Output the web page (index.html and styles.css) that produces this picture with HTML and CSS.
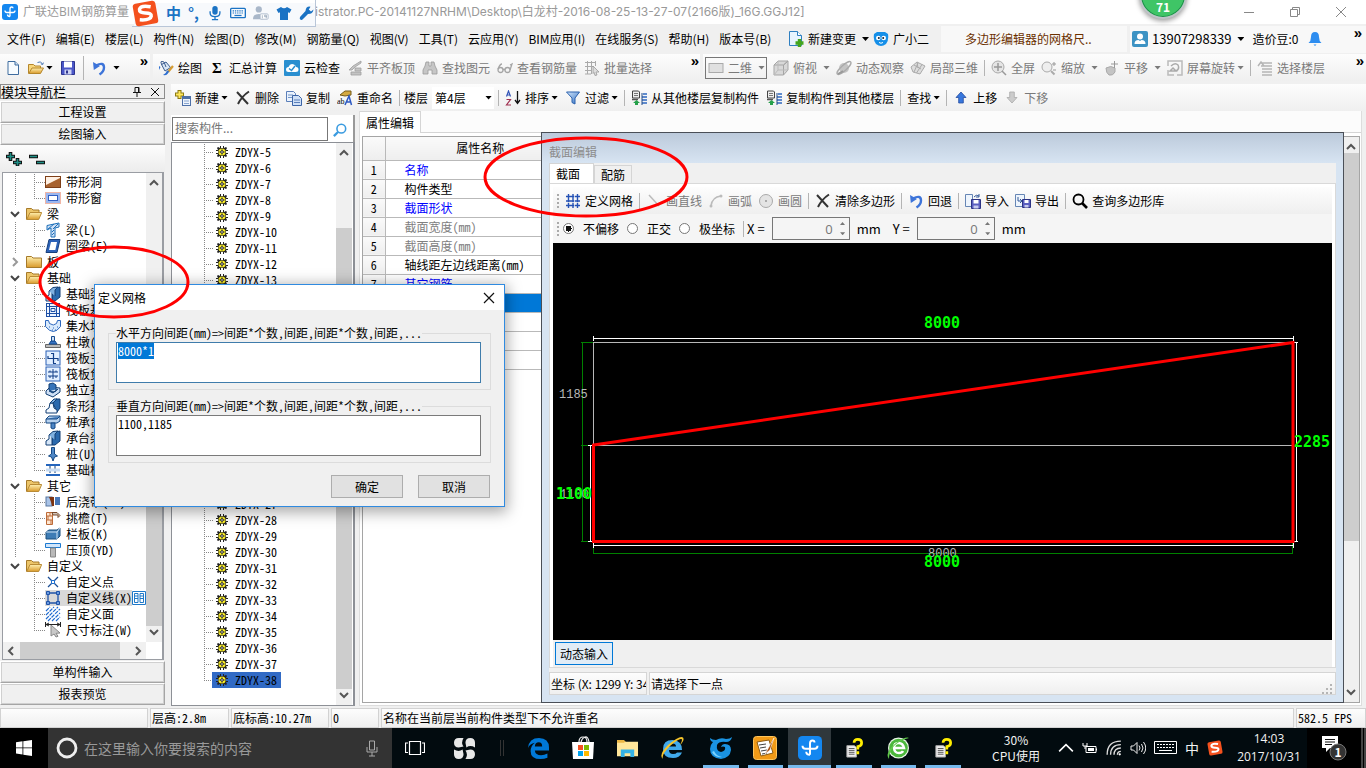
FILE: index.html
```html
<!DOCTYPE html>
<html lang="zh-CN">
<head>
<meta charset="utf-8">
<title>广联达BIM钢筋算量软件</title>
<link rel="stylesheet" href="styles.css">
</head>
<body>
<svg class="defs" aria-hidden="true">
<defs>
<linearGradient id="gFold" x1="0" y1="0" x2="0" y2="1"><stop offset="0" stop-color="#fff0b0"/><stop offset="1" stop-color="#d99a2b"/></linearGradient>
<linearGradient id="gBlue" x1="0" y1="0" x2="1" y2="1"><stop offset="0" stop-color="#d6e8fb"/><stop offset="1" stop-color="#2f6fc4"/></linearGradient>
</defs>
<symbol id="app" viewBox="0 0 16 16"><rect width="16" height="16" rx="3" fill="#1487f0"/><path d="M8 12.500V5q0-2 1.700-2 1.300 0 1.300 1.300M3 6.500q0 2 2 2h6q2 0 2-2M8 12.500q-2.500 0-2.500-2" fill="none" stroke="#fff" stroke-width="1.300"/></symbol>
<symbol id="sogou" viewBox="0 0 26 26"><g transform="rotate(-10 13 13)"><rect x="2" y="2" width="22" height="22" rx="3" fill="#f4511e"/><path d="M19 7.500Q10 4 8 8q-1 3.500 5 4.500t5 4q-1.500 4-11.500 1.500" fill="none" stroke="#fff" stroke-width="3.400"/></g></symbol>
<symbol id="mic" viewBox="0 0 16 18"><rect x="5" y="1" width="6" height="10" rx="3"/><path d="M2.500 7v2q0 4 5.500 4t5.500-4V7M8 13v3M4.500 16.500h7" fill="none" stroke="currentColor" stroke-width="1.500"/></symbol>
<symbol id="kbd" viewBox="0 0 18 14"><rect x=".75" y="1.750" width="16.500" height="10.500" rx="1" fill="none" stroke="currentColor" stroke-width="1.500"/><path d="M3 4.500h12M3 7h12" stroke="currentColor" stroke-width="1.400" stroke-dasharray="1.500 1"/><path d="M5 9.800h8" stroke="currentColor" stroke-width="1.400"/></symbol>
<symbol id="person" viewBox="0 0 18 16"><circle cx="6.500" cy="4" r="3.500" fill="#a9b7c9"/><path d="M0 15q0-6 6.500-6 4 0 5 2v4z" fill="#a9b7c9"/><rect x="8" y="9" width="9" height="6" rx="1" fill="#fff" stroke="#a9b7c9"/><path d="M10.500 10.500v3.500M13 10.500h2v1.700h-2zM15 11v3" stroke="#8fa0b5" fill="none" stroke-width=".8"/></symbol>
<symbol id="shirt" viewBox="0 0 16 16"><path d="M5 2q3 2.500 6 0l4.500 2.500-2 3.500-1.500-.8V15H4V7.200L2.500 8 .5 4.500z" fill="#1b73c4"/></symbol>
<symbol id="wrench" viewBox="0 0 16 16"><path d="M14.500 4.500 12 6.500 9.800 4.500 11.500 1.700Q7 1 6.500 6L1 12q-.8 2 .6 2.800 1.400.6 2.400-.8L9 9q5 0 5.500-4.500z" fill="#1b73c4"/></symbol>
<symbol id="page" viewBox="0 0 16 16"><path d="M3 1.500h7l3.500 3.500v9.500H3z" fill="#f8fcff" stroke="#3f6c9f"/><path d="M10 1.500V5h3.500" fill="#cfe0f2" stroke="#3f6c9f"/></symbol>
<symbol id="open" viewBox="0 0 16 16"><path d="M.5 13.500v-9h5l1.500 1.500h5.500v2" fill="#f7d67c" stroke="#b5862b"/><path d="M.8 13.500 4 8h11.500l-3 5.500z" fill="url(#gFold)" stroke="#b5862b"/><path d="M9.500 2.500q3.500-2 5 1.500M12.800 3.800l1.900.8 .7-2" fill="none" stroke="#4b79b5"/></symbol>
<symbol id="folder" viewBox="0 0 16 14"><path d="M.5 12.500v-11h5L7 3h8.500v9.500z" fill="url(#gFold)" stroke="#a67a2a"/></symbol>
<symbol id="folderO" viewBox="0 0 16 14"><path d="M.5 12.500v-11h5L7 3h6v3" fill="#ecc569" stroke="#a67a2a"/><path d="M.8 12.500 4 5.500h11.700l-3 7z" fill="url(#gFold)" stroke="#b98b35"/></symbol>
<symbol id="save" viewBox="0 0 16 16"><path d="M1.500 1.500h13v13h-13z" fill="#4b57c8" stroke="#2d348e"/><path d="M4 1.500h8v6H4z" fill="#fff"/><path d="M4.500 9.500h7v5h-7z" fill="#cdd3f2"/><path d="M6 10.500h2v3H6z" fill="#2d348e"/></symbol>
<symbol id="undo" viewBox="0 0 16 16"><path d="M5 5.500q8-4 8 2 0 4-4.500 7" fill="none" stroke="#3d74d9" stroke-width="2.400"/><path d="M2 2l.8 8L9 6z" fill="#3d74d9"/></symbol>
<symbol id="paint" viewBox="0 0 16 16"><path d="M3.500 4.500 8 2l4.500 5.500L7 11z" fill="#d9e6f5" stroke="#3c5d8f"/><path d="M4 5Q1 0 6 2l2 5" fill="none" stroke="#3c5d8f"/><path d="M1 6v4l1.500-3" fill="#2e6fd0"/><path d="M15 6l-5 6" stroke="#d59b32" stroke-width="2.200"/><path d="M5 15q5 1 6-4l-2-.5Q8 14 5 15z" fill="#2e6fd0"/></symbol>
<symbol id="cloud" viewBox="0 0 16 16"><rect width="16" height="16" rx="1" fill="#2a8fd0"/><path d="M2 9.500Q2 7 4.500 7 6 3 10 4.500q2 1 2 2.500 2.500 0 2.500 2.500t-3 2.500H4.500Q2 12 2 9.500z" fill="#fff"/><path d="m5 8.500 2.500 2L11 6" fill="none" stroke="#2a8fd0" stroke-width="1.500"/></symbol>
<symbol id="slab" viewBox="0 0 16 16"><path d="m2 10 4-4 8-5v2L8 7l-3 3zM4 12h10v3H4zM8 8h6v3H8z" fill="#c4c4c4" stroke="#9e9e9e" stroke-width=".8"/></symbol>
<symbol id="binoc" viewBox="0 0 16 16"><path d="M4 2h3v4h2V2h3l1 4 2 4v4h-5v-4H6v4H1v-4l2-4z" fill="#c6c6c6" stroke="#999" stroke-width=".8"/></symbol>
<symbol id="glasses" viewBox="0 0 16 16"><g fill="none" stroke="#a5a5a5" stroke-width="1.300"><circle cx="3.500" cy="10" r="2.500"/><circle cx="10.500" cy="10" r="2.500"/><path d="M6 9.500h2M1 9q2-5 4-5M13 10l2-6-2 1"/></g></symbol>
<symbol id="gridsel" viewBox="0 0 16 16"><path d="M1 2.500h11M1 6.500h8M1 10.500h7M1 14h6M3.500 1v13M7.500 1v13M11.500 1v5" stroke="#aaa" fill="none"/><path d="m9 6 6 6h-3l1 3-2 .5-1-3-1 1z" fill="#ddd" stroke="#999" stroke-width=".8"/></symbol>
<symbol id="rect" viewBox="0 0 16 16"><rect x="1" y="3.500" width="14" height="9" fill="#e0e0e0" stroke="#aaa"/></symbol>
<symbol id="cube" viewBox="0 0 16 16"><path d="M1 5h9.500v10H1zM1 5l4-4h10l-4.500 4M15 1v9l-4.500 5V5z" fill="#d8d8d8" stroke="#a5a5a5"/><path d="M5 1v9h10M5 10l-4 5" fill="none" stroke="#bbb"/></symbol>
<symbol id="orbit" viewBox="0 0 16 16"><circle cx="8" cy="8" r="5" fill="#c4c4c4"/><ellipse cx="8" cy="8" rx="9" ry="2.700" transform="rotate(-42 8 8)" fill="none" stroke="#aaa" stroke-width="1.300"/><path d="m2 14 5-3" stroke="#999" stroke-width="2"/></symbol>
<symbol id="iso" viewBox="0 0 16 16"><path d="m1 7 6-5 8 4-5 8-7-2zM4 5l7 4M8 3 4 12M12 4.500 6.500 13M7 2l1 6" fill="#ddd" stroke="#aaa"/></symbol>
<symbol id="full" viewBox="0 0 16 16"><circle cx="7" cy="7" r="6" fill="#e5e5e5" stroke="#aaa"/><path d="M7 3v8M3 7h8m0 4 4 4" stroke="#999" stroke-width="1.500"/></symbol>
<symbol id="zoomi" viewBox="0 0 16 16"><circle cx="6" cy="7" r="5" fill="#eee" stroke="#aaa"/><path d="m10 11 3.500 3.500" stroke="#aaa" stroke-width="2"/><path d="M11 4h4m-2-2v4M12 10h3" stroke="#999"/></symbol>
<symbol id="pan" viewBox="0 0 16 16"><path d="M2 8q5-3 9 0v4q-2 4-6 3-3-2-3-7z" fill="#c4c4c4" stroke="#aaa"/><path d="M7 4h7m-3.500-3v7" stroke="#999"/></symbol>
<symbol id="rot" viewBox="0 0 16 16"><path d="M1 6V1h14v14h-5M1 10v5h6" fill="none" stroke="#bbb" stroke-width="1.500"/><path d="M4 6q4-4 7-1 2 4-2 6M3 11l3-3 3 3z" fill="none" stroke="#aaa" stroke-width="1.500"/></symbol>
<symbol id="floors" viewBox="0 0 16 16"><path d="M5 3h10M4 6h11M5 9h10M5 12h10M5 15h10M1 6l3-4 3 4" fill="none" stroke="#b5b5b5" stroke-width="1.500"/></symbol>
<symbol id="new" viewBox="0 0 16 16"><path d="M4.500 0v9M0 4.500h9" stroke="#8c7a12" stroke-width="4"/><path d="M4.500 1v7M1 4.500h7" stroke="#ffe75e" stroke-width="2"/><rect x="7.500" y="6.500" width="8" height="9" fill="#eef4fc" stroke="#4e70a8"/><path d="M8 8h7" stroke="#4e70a8" stroke-width="2"/><path d="M9 11h5m-5 2.500h5" stroke="#8aa6d0"/></symbol>
<symbol id="del" viewBox="0 0 16 16"><path d="m2 2 11 12M14 1.500Q7 6 3 14" fill="none" stroke="#333" stroke-width="2"/></symbol>
<symbol id="copy" viewBox="0 0 16 16"><path d="M.5 1.500h7l2 2v8h-9z" fill="#eaf2fd" stroke="#5b7fb9"/><path d="M2 5h5M2 7.500h4" stroke="#7596c6"/><path d="M6.500 5.500h6l3 3v7h-9z" fill="#cfe0f7" stroke="#3c64a6"/><path d="M8 10h6m-6 2.500h6" stroke="#5b7fb9"/></symbol>
<symbol id="rename" viewBox="0 0 16 16"><path d="m3 5 5-4h6v4l-6 1z" fill="#d4a940" stroke="#755a18"/><text x="0" y="14" font-size="8" font-family="Liberation Serif">ab</text><path d="m8 15 4-9 2.500 9m-5-3h4" fill="none" stroke="#2b58c2" stroke-width="1.500"/></symbol>
<symbol id="sort" viewBox="0 0 16 16"><path d="m1.500 6.500 2-5.500 2 5.500M2 5h3" fill="none" stroke="#3355b8" stroke-width="1.200"/><path d="M1.500 9.500h4l-4 5.500h4.500" fill="none" stroke="#a03050" stroke-width="1.200"/><path d="M12.500 1v12m-2.500-3 2.500 3.500L15 10" fill="none" stroke="#111" stroke-width="1.300"/></symbol>
<symbol id="funnel" viewBox="0 0 16 16"><path d="M1.500 2h13L10 8v6l-3-1.500V8z" fill="url(#gBlue)" stroke="#2b61ad"/></symbol>
<symbol id="fromf" viewBox="0 0 16 16"><path d="M1.500 1h6l1 1v6h-7z" fill="#eee" stroke="#444"/><path d="M3 3.500h4M3 5.500h4" stroke="#777"/><path d="M1 9.500h6" stroke="#555" stroke-width="1.500"/><path d="M7 15H4v-2H2l3.500-3L9 13H7z" fill="#25a04a"/><path d="M12 4h4m-5 3h5m-5 3h5m-5 3h5" stroke="#2f68c0" stroke-width="1.600"/><path d="M11 3v12" stroke="#244a84"/></symbol>
<symbol id="up" viewBox="0 0 16 16"><path d="m8 2 5 5.500h-2.700V13H5.700V7.500H3z" fill="#3877dd" stroke="#244b9e" stroke-width=".8"/></symbol>
<symbol id="down" viewBox="0 0 16 16"><path d="m8 13 5-5.500h-2.700V2H5.700v5.500H3z" fill="#ccc" stroke="#aaa" stroke-width=".8"/></symbol>
<symbol id="newchg" viewBox="0 0 16 16"><path d="M1.500.5h8l4 4v10h-12z" fill="#e7f4ff" stroke="#2e7fc1"/><path d="M9.500.5v4h4" fill="#fff" stroke="#2e7fc1"/><path d="M11.500 8v8m-4-4h8" stroke="#43a51e" stroke-width="3.400"/></symbol>
<symbol id="mascot" viewBox="0 0 16 16"><path d="m1 3 3-2 8 0 3 2q1 6-2 10-5 4-10 0-3-4-2-10z" fill="#158fe8"/><circle cx="5.300" cy="7" r="2.300" fill="#fff"/><circle cx="10.700" cy="7" r="2.300" fill="#fff"/><circle cx="5.800" cy="7" r="1" fill="#123"/><circle cx="10.200" cy="7" r="1" fill="#123"/><path d="M6 11.500q2 1.500 4 0" stroke="#fff" fill="none"/></symbol>
<symbol id="user" viewBox="0 0 16 16"><rect width="16" height="16" rx="2" fill="#3d93c4"/><circle cx="8" cy="5.500" r="3" fill="#fff"/><path d="M2.500 13q0-4 4-4L8 10l1.500-1q4 0 4 4z" fill="#fff"/></symbol>
<symbol id="bell" viewBox="0 0 14 16"><path d="M7 1q4 0 4 5 0 4 2.500 6H.5Q3 10 3 6q0-5 4-5z" fill="#2d8df0"/><path d="M5.500 13.500h3L7 15z" fill="#2d8df0"/></symbol>
<symbol id="chevD" viewBox="0 0 12 12"><path d="m2 4 4 4 4-4" fill="none" stroke="currentColor" stroke-width="2"/></symbol>
<symbol id="chevR" viewBox="0 0 12 12"><path d="m4 2 4 4-4 4" fill="none" stroke="currentColor" stroke-width="2"/></symbol>
<symbol id="gear" viewBox="0 0 12 12"><path d="M4 0h1v2h2V0h1v2l2-1 1 1-1 2h2v1h-2v2h2v1h-2l1 2-1 1-2-1v2H7v-2H5v2H4v-2l-2 1-1-1 1-2H0V7h2V5H0V4h2L1 2l1-1 2 1z" fill="#222"/><circle cx="6" cy="6" r="3.600" fill="#fbee22"/><path d="M6 2.500v7M2.500 6h7" stroke="#444" stroke-width=".7"/><circle cx="6" cy="6" r="1.300" fill="#fff" stroke="#222"/></symbol>
<symbol id="t-hole" viewBox="0 0 16 14"><rect x=".5" y="1.500" width="15" height="11" fill="#fff1e4" stroke="#7e3f18"/><path d="M1 10 15 3v9H1z" fill="#a8622f"/></symbol>
<symbol id="t-win" viewBox="0 0 16 14"><rect x=".5" y="1.500" width="15" height="11" fill="#9db8ee" stroke="#f0b6a6"/><rect x="3.500" y="4.500" width="9" height="5" fill="#fff" stroke="#315fc4"/></symbol>
<symbol id="t-beam" viewBox="0 0 16 16"><path d="M2 3.500 14 1v4l-4 1v9H6V6L2 8z" fill="#cfe0f5" stroke="#1c6fb9"/><path d="m3 7 6-5m-1 5 5-5M7 10l2-2M7 13l2-2" stroke="#1c6fb9"/></symbol>
<symbol id="t-ring" viewBox="0 0 16 16"><path d="M4 1.500h11l-3 13H1z" fill="#2c62b8" stroke="#173f7c"/><path d="M6 4h6l-1.700 8H4z" fill="#fff"/></symbol>
<symbol id="t-fbeam" viewBox="0 0 16 16"><path d="M7 15V5l3-3 5-1v10l-5 4z" fill="#2a69ad" stroke="#123f74"/><path d="M1 15v-4l3-2V5h3v10z" fill="#d7e7f8" stroke="#123f74"/><path d="M4 5 8 1.500l5-.5-3 3v6" fill="#7fb0e0" stroke="#123f74"/></symbol>
<symbol id="t-raft" viewBox="0 0 16 16"><rect x="1.500" y="1.500" width="13" height="13" fill="#eef5ff" stroke="#1d4fa5"/><path d="M4.500 1v14m7-14v14M1 4.500h14m-14 7h14M6 6.500h4v3H6z" fill="none" stroke="#1d4fa5"/></symbol>
<symbol id="t-pit" viewBox="0 0 16 16"><path d="M.5 2.500h3l1 3q4 3 7 0l1-3h3v6q-7 10-15 0z" fill="#d9eafc" stroke="#2b66bd"/><path d="M4 9h1m3 1h1m3-1h1m-6 3h1m2 0h1" stroke="#2b66bd"/></symbol>
<symbol id="t-pier" viewBox="0 0 16 16"><path d="M.5 10.500h15v3H.5z" fill="#bbb" stroke="#666"/><path d="m4 10 2-3h4l2 3z" fill="#3774c4" stroke="#174d91"/><path d="M6.500 2.500h3V7h-3z" fill="#cfe0f5" stroke="#174d91"/></symbol>
<symbol id="t-rebar" viewBox="0 0 16 16"><rect x="1" y="1" width="14" height="14" fill="#e2efff" stroke="#2a60b6"/><path d="M8.500 3v10M3 8.500h10M3 6v3m10-1v3M6 3.500h3m-1 10h3" fill="none" stroke="#123f88" stroke-width="1.200"/></symbol>
<symbol id="t-rebar2" viewBox="0 0 16 16"><rect x="1" y="1" width="14" height="14" fill="#e2efff" stroke="#2a60b6"/><path d="M8 3v10M3 6h10M3 10h10M5 4.500V6m6-1.500V6M5 10v2m6-2v2" fill="none" stroke="#123f88"/></symbol>
<symbol id="t-indep" viewBox="0 0 16 16"><path d="m1 9 4-4 10 1v4l-7 5-7-3z" fill="#cfe0f5" stroke="#123f74"/><path d="m4 9 4 2 5-4M4 2l4-1 3 2v6l-3 1-4-2z" fill="#3774b9" stroke="#123f74"/></symbol>
<symbol id="t-strip" viewBox="0 0 16 16"><path d="M8 5l3-4h4v9l-3 4z" fill="#2a69ad" stroke="#123f74"/><path d="M1 15v-3l3-2 1-5h3l1 5 3 2v3z" fill="#f4f9ff" stroke="#123f74"/><path d="m5 5 4-4h3L8 5z" fill="#7fb0e0" stroke="#123f74"/></symbol>
<symbol id="t-cap" viewBox="0 0 16 16"><path d="m1 5 3-3h11v5l-3 2H1z" fill="#b8d2ee" stroke="#154985"/><path d="M1 5h11l3-3M6 9v5l2 1 2-1V9z" fill="#4e86c5" stroke="#154985"/></symbol>
<symbol id="t-pile" viewBox="0 0 16 16"><path d="M6.500 1.500h3V8l3 2-3 1-1.500 4L6.500 11l-3-1 3-2z" fill="#4e86c5" stroke="#154985"/></symbol>
<symbol id="t-band" viewBox="0 0 16 16"><path d="M1 3h14M1 13h14" stroke="#2465bd" stroke-width="2"/><path d="M5 4v8m5-8v8" stroke="#123f74" stroke-dasharray="3 1"/><path d="M1 8h14" stroke="#c8dcf3" stroke-width="3"/></symbol>
<symbol id="t-post" viewBox="0 0 16 16"><rect x="1" y="3" width="6" height="9" fill="#a9c3e7" stroke="#58779f"/><path d="M4 3h5v9H7l-1-4z" fill="#7c3411"/><rect x="10" y="3" width="5" height="8" fill="#4777b7"/></symbol>
<symbol id="t-eave" viewBox="0 0 16 16"><path d="M1.500 2.500h6v12h-6z" fill="#ffe7d1" stroke="#bd6b38"/><path d="M1 6h7M1 10h7M5 2v4m-2 0v4m3 0v4" stroke="#bd6b38"/><path d="M7 2.500h5l3 3-2 2V5H8z" fill="#d1c6bc" stroke="#7a4a2a"/></symbol>
<symbol id="t-rail" viewBox="0 0 16 16"><path d="m1 6 3-2h8l3-2v8l-3 3H1z" fill="#3e7cb5" stroke="#1a4e7d"/><path d="M1 6h11l3-4M12 6v7" fill="none" stroke="#cfe4f6"/></symbol>
<symbol id="t-top" viewBox="0 0 16 16"><path d="M.5 1.500h15v4H.5z" fill="#cfe5fb" stroke="#1d7ad0"/><path d="M5.500 6h5v9h-5z" fill="#b9b9b9" stroke="#888"/></symbol>
<symbol id="t-pt" viewBox="0 0 16 16"><path d="m3 3 10 10M13 3 3 13" stroke="#1d4f95" stroke-width="1.300"/><path d="M6.500 6.500h3v3h-3z" fill="#fff" stroke="#1d6fd0"/></symbol>
<symbol id="t-line" viewBox="0 0 16 16"><path d="M3 3h10v10H3z" fill="none" stroke="#1f53a8" stroke-width="1.300"/><path d="M1.500 1.500h3v3h-3zm10 0h3v3h-3zM1.500 11.500h3v3h-3zm10 0h3v3h-3z" fill="#6b9be0" stroke="#1f53a8"/></symbol>
<symbol id="t-face" viewBox="0 0 16 16"><path d="M1 5l4-4M1 9l8-8M1 13 13 1M3 15 15 3M7 15l8-8M11 15l4-4" stroke="#1f6bd0" stroke-width="1.200" stroke-dasharray="4 1"/></symbol>
<symbol id="t-dim" viewBox="0 0 16 16"><path d="M.5 0v5m15-5v5M1 2.500h14M4 1 1 2.500 4 4m8-3 3 1.500L12 4" fill="none" stroke="#222"/><path d="m6 3 9 8-4 .3 2 3-2 .7-2-3-3 2z" fill="#c8c8c8" stroke="#888"/></symbol>
<symbol id="defgrid" viewBox="0 0 16 16"><path d="M1 3.500h14M1 8h14M1 12.500h14M3.500 1v14M8 1v14M12.500 1v14" stroke="#2552b5" stroke-width="1.400" stroke-dasharray="8 .7"/></symbol>
<symbol id="disk" viewBox="0 0 16 16"><path d="M.5 1.500h7v12h-7z" fill="#eef5fd" stroke="#6686b5"/><path d="M6.500 6.500h9v9h-9z" fill="#5a5fc0" stroke="#2c3384"/><path d="M8.500 7h5v3.500h-5z" fill="#fff"/><path d="M8.500 12.500h5v3h-5z" fill="#c6caee"/><path d="M9 4q2-3 5-1m0-2v3h-3" fill="none" stroke="#345a99"/></symbol>
<symbol id="diskout" viewBox="0 0 16 16"><path d="M.5 1.500h9v12h-9z" fill="#eef5fd" stroke="#6686b5"/><path d="M3 4v4h4m-2-2 2 2-2 2" fill="none" stroke="#345a99"/><path d="M7.500 6.500h8v8h-8z" fill="#5a5fc0" stroke="#2c3384"/><path d="M9.500 7h4v3h-4z" fill="#fff"/><path d="M9.500 12h4v2.500h-4z" fill="#c6caee"/></symbol>
<symbol id="search" viewBox="0 0 16 16"><circle cx="6.500" cy="6.500" r="5" fill="none" stroke="currentColor" stroke-width="1.800"/><path d="m10 10 5 5" stroke="currentColor" stroke-width="2.600"/></symbol>
<symbol id="edge" viewBox="0 0 20 20"><path d="M0 9.500Q1 0 10.500 0 20 .5 20 9v3H6.500q.5 4.500 6 4.500 3 0 6-1.700v4Q15.500 20 12 20 2.500 20 2.500 12.500q0-5 4-8Q1.800 5.500 0 9.500zM6.500 8h7q0-4-3.300-4T6.500 8z" fill="#0078d7"/></symbol>
<symbol id="store" viewBox="0 0 24 24"><path d="M8 6q0-5 4-5t4 5M10 6q1-4 4-5t4 5" fill="none" stroke="#eee" stroke-width="1.200"/><path d="M1 6h22l-1 17H2z" fill="#fff"/><path d="M7 9h5v5H7z" fill="#f25022"/><path d="M13 9h5v5h-5z" fill="#7fba00"/><path d="M7 15h5v5H7z" fill="#00a4ef"/><path d="M13 15h5v5h-5z" fill="#ffb900"/></symbol>
<symbol id="files" viewBox="0 0 22 20"><path d="M0 2V1h7l2 2h13v15H0z" fill="#ffe69a"/><path d="M0 1h7l2 2-2 1H0z" fill="#ebb644"/><path d="M4 19v-8h14v8h-4v-4H8v4z" fill="#35b2e5"/></symbol>
<symbol id="ie" viewBox="0 0 24 24"><path d="M3 13Q3 4 12.500 4 22 4.500 22 14H9q0 4 4 4 3 0 4-1.500h5Q19.500 22 13 22 3 22 3 13zM9 10.500h7q0-3-3.500-3T9 10.500z" fill="#41a9ea"/><path d="M3 23q-5-4 5-14Q20-1 23 1.500 25 4 20 9q3-5 1.500-6Q19 2 10 10 1 19 3 23z" fill="#f6c52c"/></symbol>
<symbol id="glodon" viewBox="0 0 24 24"><path d="M1 2q2 2 6 2 5-3 10-1 4 0 6-2-1 5-6 5-7-1-9 3-1 6 4 7 5-1 4-5-2-1-4 0 1-3 4-3 6 0 6 6-1 8-10 9Q1 22 1 13q0-4 3-7-3-1-3-4z" fill="#1a93e2"/><path d="M3 16q3 6 10 5-6-1-8-6" fill="#7dd4ff"/></symbol>
<symbol id="note" viewBox="0 0 24 24"><rect x=".5" y=".5" width="23" height="23" rx="3" fill="#f19a17" stroke="#ffc45a"/><path d="m4 6 12-2 4 13-12 3z" fill="#fff" stroke="#8d5b12"/><path d="m6 9 7-1M7 12l6-1M8 15l6-1M9 18l5-1" stroke="#444"/><path d="m21 2-9 16 5-4z" fill="#a54b0e" stroke="#fff" stroke-width=".6"/></symbol>
<symbol id="help" viewBox="0 0 18 22"><path d="M1 8h8l2 2v10H1z" fill="#eee" stroke="#aaa"/><path d="M3 11h6M3 13h6M3 15h6M3 17h6" stroke="#555"/><path d="M8.500 5q0-3.500 4-3.500t4 3.500-4 4v3m0 2v3" fill="none" stroke="#ffee00" stroke-width="2.800"/></symbol>
<symbol id="green" viewBox="0 0 24 24"><circle cx="11.500" cy="12" r="10.500" fill="#e8f5e6"/><circle cx="11.500" cy="12" r="9.300" fill="#4cb83c"/><path d="M7 12h10q-1-5-5.500-5T7 12q.5 5 5 5 3 0 4-2" fill="none" stroke="#fff" stroke-width="2.500"/><path d="M2 23q-5-6 7-16Q19 0 22 2q-9 2-15 8-5 6-5 13z" fill="#61c94c"/></symbol>
<symbol id="clover" viewBox="0 0 22 22"><g fill="#e8e8e8"><path d="M10 0H5Q0 0 0 5q0 5 5 5l5-1Q7 5 10 0zM22 10V5q0-5-5-5t-5 5l1 5q4-3 9 0zM12 22h5q5 0 5-5t-5-5l-5 1q3 4 0 9zM0 12v5q0 5 5 5t5-5l-1-5q-4 3-9 0z"/></g></symbol>
<symbol id="batt" viewBox="0 0 16 12"><path d="M4 4.500h10v6H4zM14.500 6.500v2M1 1v3h4V1M3 4v3" fill="none" stroke="#fff"/><path d="M6 6h6v3H6z" fill="#fff"/></symbol>
<symbol id="wifi" viewBox="0 0 14 14"><path d="M1 13Q1 1 13 1M4 13q0-9 9-9M7 13q0-6 6-6M10 13q0-3 3-3" fill="none" stroke="#ddd" stroke-width="1.200"/><circle cx="12" cy="12.500" r="1" fill="#fff"/></symbol>
<symbol id="sound" viewBox="0 0 16 14"><path d="M1 5h2.500L7 1.500v11L3.500 9H1zM9 4.500q2 2.500 0 5M11.500 3q3 4 0 8M13.500 1q4.500 6 0 12" fill="none" stroke="#eee"/></symbol>
</svg>

<header class="titlebar">
  <svg class="i16"><use href="#app"/></svg>
  <span class="t1">广联达BIM钢筋算量</span>
  <span class="t2">istrator.PC-20141127NRHM\Desktop\白龙村-2016-08-25-13-27-07(2166版)_16G.GGJ12]</span>
  <div class="winbtns">
    <button aria-label="最小化"><svg viewBox="0 0 12 12"><path d="M1 6.500h10"/></svg></button>
    <button aria-label="还原"><svg viewBox="0 0 12 12"><path d="M1.500 3.500h7v7h-7zM3.500 3V1.500h7v7H9"/></svg></button>
    <button aria-label="关闭"><svg viewBox="0 0 12 12"><path d="m1 1 10 10M11 1 1 11"/></svg></button>
  </div>
</header>

<nav class="menubar">
  <div class="menus">
    <button>文件(F)</button><button>编辑(E)</button><button>楼层(L)</button><button>构件(N)</button><button>绘图(D)</button><button>修改(M)</button><button>钢筋量(Q)</button><button>视图(V)</button><button>工具(T)</button><button>云应用(Y)</button><button>BIM应用(I)</button><button>在线服务(S)</button><button>帮助(H)</button><button>版本号(B)</button>
  </div>
  <button class="tb"><svg class="i16"><use href="#newchg"/></svg>新建变更<i class="arr far"></i></button>
  <button class="tb mas"><svg class="i16"><use href="#mascot"/></svg>广小二</button>
  <a class="ad" href="#">多边形编辑器的网格尺..</a>
  <div class="account">
    <button class="tb"><svg class="i16"><use href="#user"/></svg>13907298339<i class="arr far"></i></button>
    <span>造价豆:0</span>
    <svg class="bell"><use href="#bell"/></svg>
    <b class="more">»</b>
  </div>
</nav>

<div class="toolrow">
  <div class="bar file">
    <button class="tb" aria-label="新建"><svg class="i16"><use href="#page"/></svg></button>
    <button class="tb" aria-label="打开"><svg class="i16"><use href="#open"/></svg><i class="arr"></i></button>
    <button class="tb" aria-label="保存"><svg class="i16"><use href="#save"/></svg></button>
    <span class="sep"></span>
    <button class="tb" aria-label="撤销"><svg class="i16"><use href="#undo"/></svg><i class="arr far"></i></button>
    <b class="more">»</b>
  </div>
  <div class="bar draw">
    <button class="tb"><svg class="i16"><use href="#paint"/></svg>绘图</button>
    <button class="tb"><b class="sigma">Σ</b>汇总计算</button>
    <button class="tb"><svg class="i16"><use href="#cloud"/></svg>云检查</button>
    <button class="tb off"><svg class="i16"><use href="#slab"/></svg>平齐板顶</button>
    <button class="tb off"><svg class="i16"><use href="#binoc"/></svg>查找图元</button>
    <button class="tb off"><svg class="i16"><use href="#glasses"/></svg>查看钢筋量</button>
    <button class="tb off"><svg class="i16"><use href="#gridsel"/></svg>批量选择</button>
    <b class="more">»</b>
  </div>
  <div class="bar view">
    <label class="dim"><svg class="i16"><use href="#rect"/></svg><select aria-label="视图"><option>二维</option></select><i class="arr"></i></label>
    <button class="tb off"><svg class="i16"><use href="#cube"/></svg>俯视<i class="arr far"></i></button>
    <button class="tb off"><svg class="i16"><use href="#orbit"/></svg>动态观察</button>
    <button class="tb off"><svg class="i16"><use href="#iso"/></svg>局部三维</button>
    <span class="sep"></span>
    <button class="tb off"><svg class="i16"><use href="#full"/></svg>全屏</button>
    <button class="tb off"><svg class="i16"><use href="#zoomi"/></svg>缩放<i class="arr far"></i></button>
    <button class="tb off"><svg class="i16"><use href="#pan"/></svg>平移<i class="arr far"></i></button>
    <button class="tb off"><svg class="i16"><use href="#rot"/></svg>屏幕旋转<i class="arr"></i></button>
    <span class="sep"></span>
    <button class="tb off"><svg class="i16"><use href="#floors"/></svg>选择楼层</button>
    <b class="more">»</b>
  </div>
</div>

<main class="work">
  <aside class="nav">
    <div class="navhead"><span>模块导航栏</span><svg viewBox="0 0 10 12"><path d="M3 1.500h4v5H3zM1 6.500h8M5 7v4M6.500 1v6"/></svg><svg viewBox="0 0 10 12"><path d="m1 2 8 8M9 2l-8 8"/></svg></div>
    <button class="navbtn">工程设置</button>
    <button class="navbtn">绘图输入</button>
    <div class="navtools">
      <svg viewBox="0 0 40 14"><g stroke="#111" stroke-width="3.600"><path d="M0 4.500h9M4.500 0v9M7 10.500h9M11.500 6v8M23 4.500h9M30 10.500h9"/></g><g stroke="#1f8f86" stroke-width="1.600"><path d="M1 4.500h7M4.500 1v7M8 10.500h7M11.500 7v6.500M24 4.500h7M31 10.500h7"/></g></svg>
    </div>
    <div class="treebox">
      <ul class="tree mono">
        <li class="leaf"><svg><use href="#t-hole"/></svg>带形洞</li>
        <li class="leaf last"><svg><use href="#t-win"/></svg>带形窗</li>
        <li class="grp"><svg class="ch"><use href="#chevD"/></svg><svg><use href="#folderO"/></svg>梁</li>
        <li class="leaf"><svg><use href="#t-beam"/></svg>梁(L)</li>
        <li class="leaf last"><svg><use href="#t-ring"/></svg>圈梁(E)</li>
        <li class="grp shut"><svg class="ch"><use href="#chevR"/></svg><svg><use href="#folder"/></svg>板</li>
        <li class="grp"><svg class="ch"><use href="#chevD"/></svg><svg><use href="#folderO"/></svg>基础</li>
        <li class="leaf"><svg><use href="#t-fbeam"/></svg>基础梁(F)</li>
        <li class="leaf"><svg><use href="#t-raft"/></svg>筏板基础(M)</li>
        <li class="leaf"><svg><use href="#t-pit"/></svg>集水坑(K)</li>
        <li class="leaf"><svg><use href="#t-pier"/></svg>柱墩(Y)</li>
        <li class="leaf"><svg><use href="#t-rebar"/></svg>筏板主筋(R)</li>
        <li class="leaf"><svg><use href="#t-rebar2"/></svg>筏板负筋(X)</li>
        <li class="leaf"><svg><use href="#t-indep"/></svg>独立基础(P)</li>
        <li class="leaf"><svg><use href="#t-strip"/></svg>条形基础(T)</li>
        <li class="leaf"><svg><use href="#t-cap"/></svg>桩承台(V)</li>
        <li class="leaf"><svg><use href="#t-fbeam"/></svg>承台梁(F)</li>
        <li class="leaf"><svg><use href="#t-pile"/></svg>桩(U)</li>
        <li class="leaf last"><svg><use href="#t-band"/></svg>基础板带(W)</li>
        <li class="grp"><svg class="ch"><use href="#chevD"/></svg><svg><use href="#folderO"/></svg>其它</li>
        <li class="leaf"><svg><use href="#t-post"/></svg>后浇带(JD)</li>
        <li class="leaf"><svg><use href="#t-eave"/></svg>挑檐(T)</li>
        <li class="leaf"><svg><use href="#t-rail"/></svg>栏板(K)</li>
        <li class="leaf last"><svg><use href="#t-top"/></svg>压顶(YD)</li>
        <li class="grp"><svg class="ch"><use href="#chevD"/></svg><svg><use href="#folderO"/></svg>自定义</li>
        <li class="leaf end"><svg><use href="#t-pt"/></svg>自定义点</li>
        <li class="leaf end"><span class="cur"><svg><use href="#t-line"/></svg>自定义线(X)</span><svg class="book" viewBox="0 0 14 14"><path d="M.5.5h13v13H.5z" fill="#fff" stroke="#1e78c8"/><path d="M2.500 2.500h3.500v9H2.500zM8 2.500h3.500v9H8zM3 5h3M3 7.500h3M8 5h3M8 7.500h3" fill="none" stroke="#1e78c8"/></svg></li>
        <li class="leaf end"><svg><use href="#t-face"/></svg>自定义面</li>
        <li class="leaf end last"><svg><use href="#t-dim"/></svg>尺寸标注(W)</li>
      </ul>
      <div class="vs navvs"><svg class="flip"><use href="#chevD"/></svg><span class="track"><i></i></span><svg><use href="#chevD"/></svg></div>
      <div class="hs"><svg class="flip"><use href="#chevR"/></svg><span class="track"><i></i></span><svg><use href="#chevR"/></svg></div>
    </div>
    <button class="navbtn">单构件输入</button>
    <button class="navbtn">报表预览</button>
  </aside>

  <div class="right">
    <div class="bar edit">
      <button class="tb"><svg class="i16"><use href="#new"/></svg>新建<i class="arr"></i></button>
      <button class="tb"><svg class="i16"><use href="#del"/></svg>删除</button>
      <button class="tb"><svg class="i16"><use href="#copy"/></svg>复制</button>
      <button class="tb"><svg class="i16"><use href="#rename"/></svg>重命名</button>
      <span class="sep"></span>
      <label class="floor">楼层<span><select><option>第4层</option></select><i class="arr"></i></span></label>
      <span class="sep"></span>
      <button class="tb"><svg class="i16"><use href="#sort"/></svg>排序<i class="arr"></i></button>
      <button class="tb"><svg class="i16"><use href="#funnel"/></svg>过滤<i class="arr"></i></button>
      <span class="sep"></span>
      <button class="tb"><svg class="i16"><use href="#fromf"/></svg>从其他楼层复制构件</button>
      <button class="tb"><svg class="i16"><use href="#fromf"/></svg>复制构件到其他楼层</button>
      <span class="sep"></span>
      <button class="tb">查找<i class="arr"></i></button>
      <span class="sep"></span>
      <button class="tb"><svg class="i16"><use href="#up"/></svg>上移</button>
      <button class="tb off"><svg class="i16"><use href="#down"/></svg>下移</button>
    </div>
    <div class="cols">
      <section class="parts">
        <div class="find"><input type="text" placeholder="搜索构件..." aria-label="搜索构件"><button aria-label="搜索"><svg><use href="#search"/></svg></button></div>
        <div class="partbox">
          <ul class="partlist mono">
            <li><svg><use href="#gear"/></svg>ZDYX-5</li><li><svg><use href="#gear"/></svg>ZDYX-6</li><li><svg><use href="#gear"/></svg>ZDYX-7</li><li><svg><use href="#gear"/></svg>ZDYX-8</li><li><svg><use href="#gear"/></svg>ZDYX-9</li><li><svg><use href="#gear"/></svg>ZDYX-10</li><li><svg><use href="#gear"/></svg>ZDYX-11</li><li><svg><use href="#gear"/></svg>ZDYX-12</li><li><svg><use href="#gear"/></svg>ZDYX-13</li><li><svg><use href="#gear"/></svg>ZDYX-14</li><li><svg><use href="#gear"/></svg>ZDYX-15</li><li><svg><use href="#gear"/></svg>ZDYX-16</li><li><svg><use href="#gear"/></svg>ZDYX-17</li><li><svg><use href="#gear"/></svg>ZDYX-18</li><li><svg><use href="#gear"/></svg>ZDYX-19</li><li><svg><use href="#gear"/></svg>ZDYX-20</li><li><svg><use href="#gear"/></svg>ZDYX-21</li><li><svg><use href="#gear"/></svg>ZDYX-22</li><li><svg><use href="#gear"/></svg>ZDYX-23</li><li><svg><use href="#gear"/></svg>ZDYX-24</li><li><svg><use href="#gear"/></svg>ZDYX-25</li><li><svg><use href="#gear"/></svg>ZDYX-26</li><li><svg><use href="#gear"/></svg>ZDYX-27</li><li><svg><use href="#gear"/></svg>ZDYX-28</li><li><svg><use href="#gear"/></svg>ZDYX-29</li><li><svg><use href="#gear"/></svg>ZDYX-30</li><li><svg><use href="#gear"/></svg>ZDYX-31</li><li><svg><use href="#gear"/></svg>ZDYX-32</li><li><svg><use href="#gear"/></svg>ZDYX-33</li><li><svg><use href="#gear"/></svg>ZDYX-34</li><li><svg><use href="#gear"/></svg>ZDYX-35</li><li><svg><use href="#gear"/></svg>ZDYX-36</li><li><svg><use href="#gear"/></svg>ZDYX-37</li><li class="last"><span><svg><use href="#gear"/></svg>ZDYX-38</span></li>
          </ul>
          <div class="vs partvs"><svg class="flip"><use href="#chevD"/></svg><span class="track"><i></i></span><svg><use href="#chevD"/></svg></div>
        </div>
      </section>
      <section class="props">
        <div class="tabs"><button class="on">属性编辑</button></div>
        <div class="propbox">
          <table class="mono">
            <thead><tr><th></th><th>属性名称</th><th></th></tr></thead>
            <tbody>
              <tr><td>1</td><td class="req">名称</td><td></td></tr>
              <tr><td>2</td><td>构件类型</td><td></td></tr>
              <tr><td>3</td><td class="req">截面形状</td><td></td></tr>
              <tr><td>4</td><td class="dis">截面宽度(mm)</td><td></td></tr>
              <tr><td>5</td><td class="dis">截面高度(mm)</td><td></td></tr>
              <tr><td>6</td><td>轴线距左边线距离(mm)</td><td></td></tr>
              <tr><td>7</td><td class="req">其它钢筋</td><td></td></tr>
              <tr class="sel"><td>8</td><td>备注</td><td></td></tr>
              <tr><td>9</td><td></td><td></td></tr>
              <tr><td>10</td><td></td><td></td></tr>
              <tr><td>11</td><td></td><td></td></tr>
            </tbody>
          </table>
          <div class="vs propvs"><svg class="flip"><use href="#chevD"/></svg><span class="track"><i></i></span><svg><use href="#chevD"/></svg></div>
        </div>
      </section>
    </div>
  </div>
</main>

<footer class="status mono"><span></span><span>层高:2.8m</span><span>底标高:10.27m</span><span>0</span><span>名称在当前层当前构件类型下不允许重名</span><span>582.5 FPS</span></footer>

<div class="taskbar">
  <button class="start" aria-label="开始"><svg viewBox="0 0 16 16"><path d="M0 2.200 6.500 1.300v6.200H0zM7.300 1.200 16 0v7.500H7.300zM0 8.300h6.500v6.200L0 13.600zM7.300 8.300H16V16l-8.700-1.200z" fill="#fff"/></svg></button>
  <label class="cortana"><svg class="ring" viewBox="0 0 22 22"><circle cx="11" cy="11" r="9" fill="none" stroke="#eee" stroke-width="2.800"/></svg><input type="text" placeholder="在这里输入你要搜索的内容" aria-label="搜索"><svg class="tmic" viewBox="0 0 12 17"><path d="M3.500 1h5v9h-5zM1 7v5h10V7M6 12v4M3 16h6" fill="none" stroke="#aaa"/></svg></label>
  <div class="apps">
    <button aria-label="任务视图"><svg class="tv" viewBox="0 0 20 16"><path d="M4.500 1.500h11v13h-11zM3 3H.5v9.500H3M17 3h2.500v9.500H17" fill="none" stroke="#fff" stroke-width="1.200"/></svg></button>
    <button aria-label="工具"><svg class="sm"><use href="#clover"/></svg></button>
    <span class="tsep"></span>
    <button aria-label="Edge"><svg class="sm"><use href="#edge"/></svg></button>
    <button aria-label="应用商店"><svg><use href="#store"/></svg></button>
    <button aria-label="文件资源管理器"><svg class="sm"><use href="#files"/></svg></button>
    <button class="iebtn" aria-label="Internet Explorer"><svg><use href="#ie"/></svg></button>
    <button class="run" aria-label="广联达"><svg><use href="#glodon"/></svg></button>
    <button class="run" aria-label="便笺"><svg><use href="#note"/></svg></button>
    <button class="run act" aria-label="钢筋算量"><svg><use href="#app"/></svg></button>
    <button class="run" aria-label="帮助"><svg class="sm"><use href="#help"/></svg></button>
    <button class="run" aria-label="浏览器"><svg><use href="#green"/></svg></button>
    <button class="run" aria-label="帮助"><svg class="sm"><use href="#help"/></svg></button>
  </div>
  <div class="cpu">30%<br>CPU使用</div>
  <div class="tray">
    <svg viewBox="0 0 14 14"><path d="m1 10 6-6 6 6" fill="none" stroke="#fff" stroke-width="1.400"/></svg>
    <svg><use href="#batt"/></svg><svg><use href="#wifi"/></svg><svg><use href="#sound"/></svg>
    <svg class="tk" viewBox="0 0 23 14"><path d="M.5.5h22v12H.5z" fill="none" stroke="#fff"/><path d="M3 3.500h17M3 6.500h17" stroke="#fff" stroke-dasharray="2 1"/><path d="M5 9.500h13" stroke="#fff"/></svg>
    <span>中</span><svg><use href="#sogou"/></svg>
  </div>
  <div class="clock">14:03<br>2017/10/31</div>
  <button class="notif" aria-label="通知"><svg viewBox="0 0 26 26"><path d="M1 1h16v12H9l-4 4v-4H1z" fill="#fff"/><path d="M4 4.500h10M4 7h10M4 9.500h7" stroke="#111"/><circle cx="17" cy="17" r="8" fill="#333" stroke="#777"/></svg><b>1</b></button>
</div>

<section class="secwin">
  <h2>截面编辑</h2>
  <div class="secbody">
    <div class="tabs"><button class="on">截面</button><button>配筋</button></div>
    <div class="secpage">
      <div class="bar sec1">
        <span class="grip"></span>
        <button class="tb"><svg class="i16"><use href="#defgrid"/></svg>定义网格</button>
        <span class="sep"></span>
        <button class="tb off"><svg class="i16" viewBox="0 0 16 16"><path d="m3 2 10 11" stroke="#bbb" stroke-width="1.500"/></svg>画直线</button>
        <button class="tb off"><svg class="i16" viewBox="0 0 16 16"><path d="M3 13Q4 4 13 3" stroke="#bbb" stroke-width="1.500" fill="none"/><circle cx="3" cy="13" r="1.500" fill="#bbb"/><circle cx="13" cy="3" r="1.500" fill="#bbb"/></svg>画弧</button>
        <button class="tb off"><svg class="i16" viewBox="0 0 16 16"><circle cx="8" cy="8" r="6.500" fill="#e4e4e4" stroke="#aaa"/><circle cx="8" cy="8" r="1" fill="#999"/></svg>画圆</button>
        <span class="sep"></span>
        <button class="tb"><svg class="i16"><use href="#del"/></svg>清除多边形</button>
        <span class="sep"></span>
        <button class="tb"><svg class="i16"><use href="#undo"/></svg>回退</button>
        <span class="sep"></span>
        <button class="tb"><svg class="i16"><use href="#disk"/></svg>导入</button>
        <button class="tb"><svg class="i16"><use href="#diskout"/></svg>导出</button>
        <span class="sep"></span>
        <button class="tb"><svg class="i16"><use href="#search"/></svg>查询多边形库</button>
      </div>
      <div class="bar sec2">
        <span class="grip"></span>
        <label class="ra"><input type="radio" name="off" checked>不偏移</label>
        <label class="ra"><input type="radio" name="off">正交</label>
        <label class="ra"><input type="radio" name="off">极坐标</label>
        <span class="sep"></span>
        <label class="num">X =<span><input type="text" value="0" disabled><i class="arr upa"></i><i class="arr dna"></i></span>mm</label>
        <label class="num">Y =<span><input type="text" value="0" disabled><i class="arr upa"></i><i class="arr dna"></i></span>mm</label>
      </div>
      <svg class="canvas" viewBox="553 243 779 397" preserveAspectRatio="none">
        <g fill="none" shape-rendering="crispEdges">
          <path d="M593.500 541V342.500H1293M593 445.500h700" stroke="#b8b8b8"/>
          <path d="M582.500 342v199M581 342.500h12M581 445.500h12M581 541.500h12M593.500 541v13M593 553.500h700M1292.500 541v13" stroke="#008000"/>
          <path d="M593 338.500h700M593.500 336v5M1293.500 336v5M593 545.500h700M593.500 543v5M1293.500 543v5M590.500 445v97M588 445.500h5M588 541.500h5M1296.500 342v200M1294 342.500h4M1294 541.500h4" stroke="#fff"/>
        </g>
        <path d="M593.500 445 1293 342.500V541.500H593.500z" fill="none" stroke="#f00" stroke-width="3"/>
        <g class="thin"><text x="559" y="398">1185</text><text x="560" y="498">1100</text><text x="928" y="557">8000</text></g>
        <g class="dimtx"><text x="924" y="328">8000</text><text x="1294" y="447">2285</text><text x="556" y="499">1100</text><text x="924" y="567">8000</text></g>
      </svg>
      <div class="dyn"><button>动态输入</button></div>
    </div>
    <div class="secstat"><span>坐标 (X: 1299 Y: 34</span><span>请选择下一点<svg viewBox="0 0 12 12"><path d="M8 2h2v2H8zM8 6h2v2H8zM8 10h2v2H8zM4 6h2v2H4zM4 10h2v2H4zM0 10h2v2H0z" fill="#b5b5b5"/></svg></span></div>
  </div>
</section>

<section class="dialog" role="dialog" aria-labelledby="dt">
  <header><h2 id="dt">定义网格</h2><button aria-label="关闭"><svg viewBox="0 0 12 12"><path d="m1 1 10 10M11 1 1 11" stroke="#111" stroke-width="1.200"/></svg></button></header>
  <form class="mono">
    <fieldset><legend><label for="hx">水平方向间距(mm)=&gt;间距*个数,间距,间距*个数,间距,...</label></legend><textarea id="hx" class="act">8000*1</textarea></fieldset>
    <fieldset><legend><label for="vx">垂直方向间距(mm)=&gt;间距*个数,间距,间距*个数,间距,...</label></legend><textarea id="vx">1100,1185</textarea></fieldset>
    <div class="acts"><button type="button">确定</button><button type="button">取消</button></div>
  </form>
</section>

<div class="ime">
  <svg class="slogo"><use href="#sogou"/></svg><b>中</b><b class="pun">°,</b>
  <svg fill="#1b73c4"><use href="#mic"/></svg><svg><use href="#kbd"/></svg><svg><use href="#person"/></svg><svg><use href="#shirt"/></svg><svg><use href="#wrench"/></svg>
</div>
<div class="ball">71</div>
<svg class="marks"><ellipse cx="114" cy="282" rx="74" ry="35"/><ellipse cx="586" cy="177" rx="101" ry="39"/></svg>
<script src="script.js"></script>
</body>
</html>
```
FILE: styles.css
```css
* { box-sizing: border-box; }
body {
  margin: 0; height: 100vh; display: flex; flex-direction: column; position: relative; overflow: hidden;
  background: #f0f0f0; color: #000; font: 12px/16px "Noto Sans CJK SC", sans-serif;
}
button, input, select, textarea { font: inherit; color: inherit; margin: 0; padding: 0; border: 0; background: none; border-radius: 0; }
button { white-space: nowrap; }
h2 { margin: 0; font: inherit; }
ul { margin: 0; padding: 0; list-style: none; }
svg { display: block; flex: none; }
.defs { position: absolute; width: 0; height: 0; }
.i16 { width: 16px; height: 16px; }
.mono { font-family: "Noto Sans Mono CJK SC", "Noto Sans CJK SC", monospace; }

.titlebar { flex: none; height: 24px; background: #fff; display: flex; align-items: center; padding-left: 2px; color: #999; font-family: "Open Sans", "Noto Sans CJK SC", sans-serif; white-space: nowrap; }
.t1 { margin-left: 5px; width: 292px; overflow: hidden; }
.t2 { flex: 1; overflow: hidden; font-family: Inter, "Noto Sans CJK SC", sans-serif; }
.winbtns { display: flex; gap: 34px; padding-right: 19px; }
.winbtns button { width: 12px; height: 12px; }
.winbtns svg { width: 12px; height: 12px; fill: none; stroke: #888; }

.menubar { flex: none; height: 30px; display: flex; align-items: center; padding-left: 7px; white-space: nowrap; }
.menus { display: flex; gap: 10px; width: 781px; }
.tb { display: flex; align-items: center; gap: 4px; height: 22px; }
.off { color: #7a7a7a; }
.arr { flex: none; width: 7px; height: 4px; background: currentColor; clip-path: polygon(0 0, 100% 0, 50% 100%); }
.tb .arr { margin-left: -2px; }
.tb .far { margin-left: 2px; }
.mas { margin-left: 4px; width: 68px; }
.ad { display: block; width: 186px; padding: 5px 0 5px 24px; background: #f8f8f8; color: #6b3000; text-decoration: none; }
.account { flex: 1; margin-left: 3px; height: 27px; background: #f8f8f8; display: flex; align-items: center; padding: 0 4px 0 2px; }
.account span { margin-left: 8px; width: 56px; }
.account .tb { font-size: 13px; }
.bell { width: 14px; height: 16px; }
.more { align-self: flex-start; margin-left: auto; font: bold 15px/14px "Liberation Sans", sans-serif; }

.toolrow { flex: none; display: flex; gap: 3px; height: 27px; }
.bar { display: flex; align-items: center; height: 27px; background: linear-gradient(#fdfdfd, #efefef); white-space: nowrap; gap: 7px; }
.sep { width: 1px; height: 16px; background: #b4b4b4; }
.file { width: 150px; padding: 0 2px 0 5px; gap: 7px; }
.file .sep { height: 24px; }
.draw { width: 547px; padding: 0 1px 0 5px; }
.sigma { width: 16px; font: bold 15px/16px "Liberation Serif", serif; }
.view { flex: 1; padding: 0 2px; gap: 6px; }
.dim { display: flex; align-items: center; gap: 4px; width: 62px; height: 22px; padding: 0 2px; border: 1px solid #777; color: #7a7a7a; }
select { appearance: none; width: 24px; outline: 0; }
.dim .arr { margin-left: 2px; }

.work { flex: 1; min-height: 0; display: flex; gap: 6px; padding-top: 3px; }
.nav { width: 165px; display: flex; flex-direction: column; padding-bottom: 1px; background: #f0f0f0; }
.navhead { height: 15px; margin-bottom: 2px; border: 1px solid #8c8c8c; display: flex; align-items: center; gap: 8px; padding-right: 4px; font-size: 13px; line-height: 13px; }
.navhead span { flex: 1; }
.navhead svg { width: 10px; height: 12px; fill: none; stroke: #111; }
.navbtn { height: 22px; flex: none; border: 1px solid #a5a5a5; border-top-color: #fff; border-left-color: #fff; box-shadow: 0 0 0 1px #d0d0d0 inset; background: #f0f0f0; }
.navtools { height: 27px; flex: none; padding: 7px 6px; background: linear-gradient(#fdfdfd, #ececec); }
.navtools svg { width: 40px; height: 14px; }
.treebox { flex: 1; min-height: 0; margin: 0 1px 1px 2px; border: 2px solid #9a9da3; border-width: 1px 2px 1px 1px; background: #fff; display: grid; grid-template: minmax(0, 1fr) 17px / minmax(0, 1fr) 16px; }
.tree { overflow: hidden; padding-top: 1px; }
.tree li { height: 16px; line-height: 16px; display: flex; align-items: center; gap: 5px; white-space: nowrap; }
.tree svg { width: 16px; height: 16px; }
.tree .leaf { --h: 16px; --o: 1px;
  padding-left: 42px;
  background:
    repeating-linear-gradient(90deg, #888 0 1px, transparent 1px 2px) 31px 8px / 11px 1px no-repeat,
    repeating-linear-gradient(#888 0 1px, transparent 1px 2px) 31px 0 / 1px var(--h) no-repeat,
    repeating-linear-gradient(#888 0 1px, transparent 1px 2px) 12px 0 / var(--o) 16px no-repeat; }
.tree .last { --h: 8px; }
.tree .end { --o: 0; }
.tree .grp { padding-left: 6px; }
.tree .grp .ch { width: 12px; height: 12px; color: #444; }
.tree .shut .ch { color: #999; }
.cur { display: flex; gap: 5px; background: #d9d9d9; }
.tree .cur + .book { width: 14px; height: 14px; margin-left: -5px; }
.vs { background: #f0f0f0; display: flex; flex-direction: column; align-items: center; padding: 4px 0; color: #555; }
.vs svg, .hs svg { width: 12px; height: 12px; }
.vs .track { flex: 1; width: 100%; display: flex; flex-direction: column; }
.track i { background: #cdcdcd; }
.flip { transform: rotate(180deg); }
.navvs .track i { height: 51%; margin-top: auto; }
.hs { grid-column: 1 / 2; background: #f0f0f0; display: flex; align-items: center; gap: 3px; padding: 0 2px; color: #555; }
.hs .track { flex: 1; height: 100%; display: flex; }
.hs .track i { width: 92%; }

.right { flex: 1; min-width: 0; display: flex; flex-direction: column; }
.edit { flex: none; padding-left: 4px; }
.edit .sep { margin: 0 -1px; }
.floor { display: flex; align-items: center; gap: 4px; margin-left: -2px; }
.floor span { display: flex; align-items: center; width: 62px; height: 22px; padding-left: 3px; background: #fff; }
.floor select { width: 50px; }
.edit .floor + .sep { margin-left: -3px; }
.cols { flex: 1; min-height: 0; display: flex; gap: 4px; }
.parts { width: 184px; padding-top: 4px; display: flex; flex-direction: column; }
.find { display: flex; height: 27px; background: #fff; padding: 2px 1px 0; border-right: 2px solid #999; }
.find input { width: 157px; height: 24px; border: 1px solid #777; background: #fff; padding: 0 2px 3px; }
.find input::placeholder { color: #757575; opacity: 1; }
.find button { padding: 0 5px; color: #3a9be0; }
.find svg { width: 14px; height: 14px; transform: scaleX(-1); }
.partbox { flex: 1; min-height: 0; border: 1px solid #8d9096; border-right-width: 2px; background: #fff; display: flex; }
.partlist { flex: 1; padding-top: 1px; }
.partlist li { height: 16px; padding-left: 44px; --h: 16px;
  background:
    repeating-linear-gradient(90deg, #888 0 1px, transparent 1px 2px) 32px 8px / 10px 1px no-repeat,
    repeating-linear-gradient(#888 0 1px, transparent 1px 2px) 32px 0 / 1px var(--h) no-repeat; }
.partlist li, .partlist span { display: flex; align-items: center; gap: 7px; }
.partlist svg { width: 12px; height: 12px; }
.partlist .last { --h: 8px; padding-left: 40px; }
.partlist .last span { background: #316ac5; padding: 0 4px; }
.partvs { width: 16px; margin-right: 1px; }
.partvs .track { padding-top: 69px; }
.partvs .track i { flex: 1; }
.props { flex: 1; min-width: 0; display: flex; flex-direction: column; background: #fff; margin-right: 4px; border: 1px solid #ddd; border-top: 0; }
.tabs { display: flex; }
.props .tabs { height: 22px; background: #fcfcfc; border-bottom: 1px solid #d5d5d5; }
.props .tabs button { height: 22px; padding: 0 6px; background: #fff; border: 1px solid #d5d5d5; border-bottom: 0; border-left: 0; }
.propbox { flex: 1; min-height: 0; margin: 3px 1px 2px 2px; border: 1px solid #a5a5a5; display: flex; align-items: stretch; }
.propbox table { flex: 1; align-self: flex-start; border-collapse: collapse; table-layout: fixed; }
.propbox th, .propbox td { height: 19px; padding: 0; border-bottom: 1px solid #b9b9b9; font-weight: normal; line-height: 16px; }
.propbox th { height: 23px; background: linear-gradient(#fafafa, #eee); }
.propbox tr > :first-child { width: 22px; text-align: center; border-right: 1px solid #b9b9b9; background: linear-gradient(#fafafa, #eee); }
.propbox tr > :nth-child(2) { width: 190px; }
.propbox td:nth-child(2) { padding-left: 19px; }
.req { color: #00f; }
.dis { color: #808080; }
.propbox .sel td + td { background: #0078d7; color: #fff; }
.propvs { width: 17px; }
.propvs .track { padding-bottom: 145px; }
.propvs .track i { flex: 1; }

.status { flex: none; height: 22px; padding-top: 2px; display: flex; gap: 2px; white-space: nowrap; }
.status span { height: 20px; padding: 0 1px; line-height: 18px; border: 1px solid #d2d2d2; background: linear-gradient(#fdfdfd, #efefef); width: 79px; overflow: hidden; }
.status span:nth-child(1) { width: 148px; }
.status span:nth-child(3) { width: 98px; }
.status span:nth-child(4) { width: 48px; }
.status span:nth-child(5) { width: auto; flex: 1; }
.status span:nth-child(6) { width: 70px; }

.taskbar { flex: none; height: 40px; background: #020b0f; display: flex; color: #f2f2f2; }
.start { width: 48px; background: #000; padding: 0 16px; }
.cortana { width: 344px; background: #333; display: flex; align-items: center; padding: 0 14px 0 8px; }
.ring { width: 22px; height: 22px; }
.cortana input { flex: 1; min-width: 0; padding: 0 6px; font-size: 14px; }
.cortana input::placeholder { color: #999; opacity: 1; }
.tmic { width: 12px; height: 17px; }
.apps { display: flex; width: 578px; padding-left: 1px; }
.apps button { width: 45px; display: flex; align-items: center; justify-content: center; border-bottom: 3px solid transparent; border-top: 3px solid transparent; }
.apps svg { width: 24px; height: 24px; }
.apps .sm { width: 21px; height: 21px; }
.apps .tv { width: 20px; height: 16px; }
.apps button:nth-child(2) { width: 56px; }
.tsep { width: 4px; height: 16px; margin: 12px 13px 0 7px; border: solid #333; border-width: 0 1px; }
.apps .iebtn { margin-right: 9px; }
.apps .run { width: 36px; margin-right: 9px; border-bottom-color: #76b9ed; }
.apps .act { width: 44px; margin: 0 5px 0 -4px; background: #30383c; }
.cpu { width: 88px; padding: 4px 0 0 4px; text-align: center; }
.tray { display: flex; align-items: center; gap: 8px; width: 173px; }
.tray svg { width: 16px; height: 16px; }
.tray .tk { width: 23px; height: 14px; }
.tray span { font-size: 14px; }
.clock { width: 76px; padding-top: 2px; text-align: center; line-height: 18px; font-family: "Open Sans", sans-serif; }
.notif { flex: 1; display: grid; place-items: center; background: #000; color: #fff; border-right: 5px double #444; }
.notif svg, .notif b { grid-area: 1 / 1; }
.notif svg { width: 26px; height: 26px; }
.notif b { padding: 8px 0 0 8px; }

.secwin { position: absolute; left: 541px; top: 132px; right: 22px; bottom: 65px; border: 1px solid #4a4f57; background: #d7e4f2; padding: 0 7px 7px; display: flex; flex-direction: column; }
.secwin h2 { margin: 0 -7px; height: 30px; padding: 11px 7px 0; line-height: 16px; color: #8c8c8c; background: linear-gradient(#bccadb, #d7e4f2); }
.secbody { flex: 1; min-height: 0; background: #f0f0f0; display: flex; flex-direction: column; }
.secbody .tabs { height: 20px; align-items: flex-end; }
.secbody .tabs button { height: 18px; padding: 0 4px; width: 38px; border: 1px solid #d5d5d5; border-bottom: 0; background: #f0f0f0; line-height: 16px; }
.secbody .tabs .on { height: 20px; width: 45px; padding: 0 6px; text-align: left; background: #fff; }
.secpage { flex: 1; min-height: 0; border: 1px solid #d9d9d9; background: #fff; padding: 3px 3px 0; display: flex; flex-direction: column; }
.secpage .bar { flex: none; padding-left: 4px; gap: 6px; }
.grip { width: 2px; height: 14px; background: repeating-linear-gradient(#aaa 0 2px, transparent 2px 4px); }
.secpage .sec2 { height: 29px; background: #f5f5f5; gap: 4px; }
.ra { display: flex; align-items: center; gap: 9px; margin-right: 4px; }
.ra input { appearance: none; width: 11px; height: 11px; border: 1px solid #777; border-radius: 50%; background: #fff; }
.ra input:checked { background: radial-gradient(#111 0 3px, #fff 3px); }
.num { display: flex; align-items: center; gap: 7px; margin-right: 8px; font-size: 13px; }
.sec2 .sep { margin-right: -1px; }
.num span { display: grid; grid-template: 1fr 1fr / 1fr 12px; justify-items: center; align-items: center; width: 78px; height: 23px; border: 1px solid #777; background: #f5f5f5; color: #777; }
.num input { grid-row: 1 / 3; width: 100%; text-align: right; padding-right: 4px; font: 13px/16px "Open Sans", sans-serif; }
.num .arr { width: 5px; height: 3px; }
.upa { transform: rotate(180deg); }
.canvas { flex: 1; min-height: 0; width: 100%; background: #000; }
.thin { font: 12px "Liberation Mono", monospace; fill: #b8b8b8; }
.dimtx { font: bold 15px "DejaVu Sans Mono", monospace; fill: #0f0; }
.dyn { flex: none; height: 27px; padding: 2px; background: #f0f0f0; }
.dyn button { width: 58px; height: 23px; border: 1px solid #0078d7; background: #e1ecf6; }
.secstat { flex: none; display: flex; gap: 2px; height: 27px; padding-top: 4px; white-space: nowrap; }
.secstat span { height: 23px; line-height: 21px; padding: 0 1px; border: 1px solid #d5d5d5; background: linear-gradient(#fdfdfd, #efefef); width: 98px; overflow: hidden; }
.secstat span + span { width: auto; flex: 1; display: flex; justify-content: space-between; align-items: flex-end; }
.secstat svg { width: 12px; height: 12px; }

.dialog { position: absolute; left: 94px; top: 284px; width: 411px; border: 1px solid #2f8ae0; background: #f0f0f0; box-shadow: 0 3px 14px 2px rgba(0, 0, 0, .35); }
.dialog header { height: 25px; background: #fff; display: flex; align-items: center; justify-content: space-between; padding: 0 9px 0 3px; }
.dialog header button, .dialog header svg { width: 12px; height: 12px; }
.dialog form { padding: 14px 13px 8px; }
fieldset { margin: 0 0 7px; padding: 0 9px 7px 7px; border: 1px solid #dcdcdc; height: 66px; }
legend { padding: 0; height: 18px; line-height: 18px; }
textarea { display: block; width: 100%; height: 41px; resize: none; outline: 0; border: 1px solid #7a7a7a; background: #fff; padding: 0 1px; overflow: hidden; }
textarea.act { border-color: #3f7cab; }
textarea::selection { background: #0078d7; color: #fff; }
.acts { display: flex; justify-content: flex-end; gap: 15px; padding: 5px 1px 0; }
.acts button { width: 72px; height: 23px; border: 1px solid #adadad; background: #e1e1e1; }

.ime { position: absolute; left: 132px; top: 0; height: 27px; width: 184px; display: flex; align-items: center; gap: 7px; color: #1b73c4; background: linear-gradient(#f7f9fc, #f7f9fc) 2px 3px / 100% 24px no-repeat; border-right: 1px solid #b9c6d8; border-bottom: 1px solid #b9c6d8; }
.ime svg { width: 16px; height: 16px; }
.ime .slogo { width: 27px; height: 27px; }
.ime b { font-size: 15px; }
.ime .pun { width: 14px; }
.ball { position: absolute; left: 1139px; top: -29px; width: 48px; height: 48px; border-radius: 50%; border: 2px solid #bfc4c8; background: #3fc566; color: #fff; font-weight: bold; text-align: center; padding-top: 26px; box-shadow: 0 0 0 1px #1d8d4a inset, 0 2px 5px rgba(0, 0, 0, .4); }
.marks { position: absolute; left: 0; top: 0; width: 700px; height: 330px; pointer-events: none; fill: none; stroke: #f00; stroke-width: 3; }
```
FILE: script.js
```js
const field = document.getElementById('hx');
field.focus();
field.select();
```
